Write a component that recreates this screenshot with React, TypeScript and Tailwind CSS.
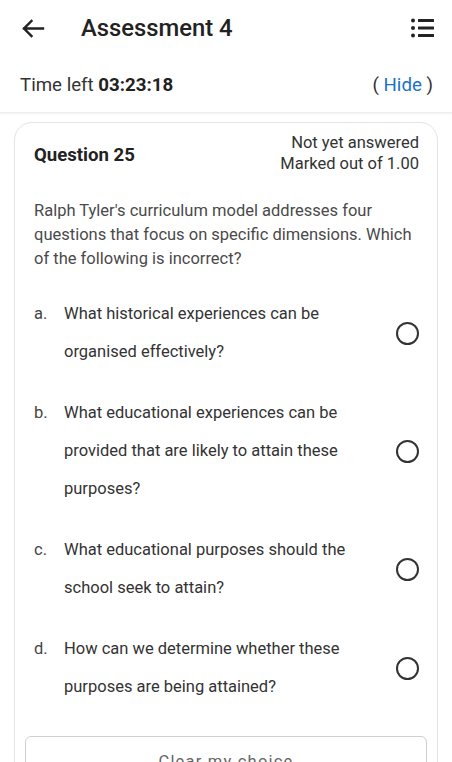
import React from "react";

const options = [
  { k: "a.", t: "What historical experiences can be organised effectively?" },
  { k: "b.", t: "What educational experiences can be provided that are likely to attain these purposes?" },
  { k: "c.", t: "What educational purposes should the school seek to attain?" },
  { k: "d.", t: "How can we determine whether these purposes are being attained?" },
];

export default function App() {
  return (
    <div
      className="w-[452px] h-[762px] overflow-hidden bg-white text-[#333]"
      style={{ fontFamily: "Roboto, 'Noto Sans', sans-serif" }}
    >
      {/* header */}
      <div className="h-[56px] flex items-center">
        <div className="w-[81px] flex items-center pl-[21px]">
          <svg width="24" height="24" viewBox="0 0 24 24" fill="none">
            <path d="M22 12.5H3M10.5 5L3 12.5L10.5 20" stroke="#222" strokeWidth="2.4" strokeLinecap="square" />
          </svg>
        </div>
        <div className="flex-1 mt-[2px] text-[23.8px] font-medium text-[#222]">Assessment 4</div>
        <div className="pr-[18px]">
          <svg width="24" height="20" viewBox="0 0 24 20" fill="#222">
            <circle cx="3" cy="2.5" r="2" />
            <circle cx="3" cy="10" r="2" />
            <circle cx="3" cy="17.5" r="2" />
            <rect x="8" y="1" width="16" height="3" rx="0.5" />
            <rect x="8" y="8.5" width="16" height="3" rx="0.5" />
            <rect x="8" y="16" width="16" height="3" rx="0.5" />
          </svg>
        </div>
      </div>
      {/* time row */}
      <div className="h-[57px] pt-[2px] flex items-center justify-between pl-[20px] pr-[19px] text-[18.7px] text-[#333] border-b border-[#eeeeee] shadow-[0_1px_2px_rgba(0,0,0,0.06)]">
        <div>
          Time left <span className="font-bold text-[#222]">03:23:18</span>
        </div>
        <div>
          ( <span className="text-[#1a73c8]">Hide</span> )
        </div>
      </div>
      {/* card */}
      <div className="ml-[14px] w-[424px] mt-[9px] border border-[#e4e4e4] rounded-[18px] pt-[9px] pb-[20px]">
        <div className="flex items-center justify-between pl-[19px] pr-[18px]">
          <div className="text-[18.6px] font-bold text-[#222] mt-[6px]">Question 25</div>
          <div className="text-right text-[16.5px] leading-[21px] text-[#333]">
            <div>Not yet answered</div>
            <div>Marked out of 1.00</div>
          </div>
        </div>
        <div className="pl-[19px] pr-[20px] mt-[25px] text-[16.5px] leading-[24px] text-[#4a4a4a]">
          Ralph Tyler's curriculum model addresses four questions that focus on specific dimensions. Which of the following is incorrect?
        </div>
        <div className="mt-[24px] flex flex-col gap-[23px] pl-[19px] pr-[18px]">
          {options.map((o) => (
            <div key={o.k} className="flex items-center">
              <div className="w-[30px] self-start text-[16.5px] leading-[38px] text-[#444]">{o.k}</div>
              <div className="w-[300px] text-[16.5px] leading-[38px] text-[#333]">{o.t}</div>
              <div className="flex-1 flex justify-end">
                <div className="w-[23px] h-[23px] rounded-full border-2 border-[#333]" />
              </div>
            </div>
          ))}
        </div>
        <div className="mx-[10px] mt-[30px] h-[52px] border border-[#d0d0d0] rounded-[6px] flex items-center justify-center text-[16.5px] tracking-[1.2px] text-[#666]">
          Clear my choice
        </div>
      </div>
    </div>
  );
}
